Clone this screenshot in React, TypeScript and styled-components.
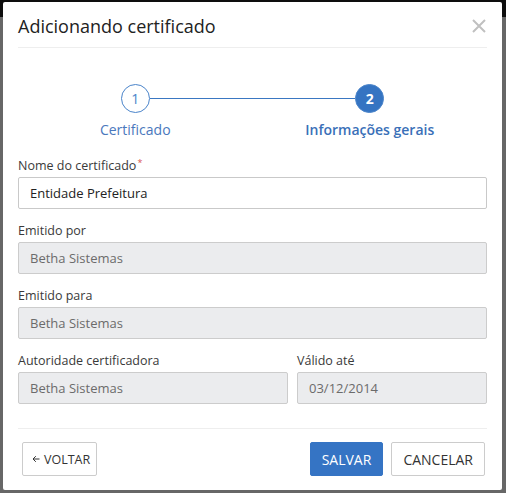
import styled, { createGlobalStyle } from 'styled-components';

const GlobalStyle = createGlobalStyle`
  html, body {
    margin: 0;
    padding: 0;
  }
  body {
    font-family: 'Open Sans', 'Liberation Sans', sans-serif;
    background: linear-gradient(#0e0e0e 0, #0e0e0e 17px, #676767 17px, #676767 100%);
    min-height: 493px;
  }
`;

const Backdrop = styled.div`
  width: 506px;
  height: 493px;
  padding: 2px 3px 0 3px;
  box-sizing: border-box;
`;

const Modal = styled.div`
  width: 499px;
  height: 488px;
  background: #ffffff;
  border-radius: 2px;
  padding: 0 15px;
  box-sizing: border-box;
  display: flex;
  flex-direction: column;
`;

const Header = styled.div`
  display: flex;
  align-items: center;
  justify-content: space-between;
  height: 45px;
  border-bottom: 1px solid #eeeeee;
`;

const Title = styled.h4`
  margin: 0;
  font-size: 18px;
  font-weight: 400;
  color: #222222;
  padding-top: 2px;
`;

const Close = styled.svg`
  width: 14px;
  height: 14px;
  margin-right: 1px;
  margin-top: 2px;
`;

const Stepper = styled.div`
  position: relative;
  display: grid;
  grid-template-columns: 1fr 1fr;
  padding-top: 36px;
  margin-bottom: 18px;
`;

const Connector = styled.div`
  position: absolute;
  top: 50px;
  left: 132px;
  right: 132px;
  height: 1px;
  background: #3a77c2;
`;

const Step = styled.div`
  display: flex;
  flex-direction: column;
  align-items: center;
  position: relative;
`;

const Circle = styled.div<{ $active?: boolean }>`
  width: 27px;
  height: 27px;
  border-radius: 50%;
  border: 1px solid #4a84ca;
  background: ${(p) => (p.$active ? '#3574c2' : '#ffffff')};
  color: ${(p) => (p.$active ? '#ffffff' : '#4a84ca')};
  font-size: 14px;
  font-weight: ${(p) => (p.$active ? 700 : 400)};
  display: flex;
  align-items: center;
  justify-content: center;
`;

const StepLabel = styled.div<{ $active?: boolean }>`
  margin-top: 7px;
  font-size: 14px;
  color: ${(p) => (p.$active ? '#3a70b8' : '#4a78bd')};
  font-weight: ${(p) => (p.$active ? 600 : 400)};
`;

const Field = styled.div`
  display: flex;
  flex-direction: column;
  margin-bottom: 13px;
`;

const Row = styled.div`
  display: grid;
  grid-template-columns: 270px 1fr;
  column-gap: 9px;
`;

const Label = styled.label`
  font-size: 12.5px;
  color: #3a3a3a;
  font-weight: 500;
  margin-bottom: 3px;
  line-height: 17px;
  height: 17px;
`;

const Required = styled.span`
  color: #d9534f;
  font-size: 9px;
  line-height: 0;
  position: relative;
  top: -4px;
  margin-left: 1px;
`;

const Input = styled.input`
  height: 32px;
  box-sizing: border-box;
  border: 1px solid #c9c9c9;
  border-radius: 2px;
  padding: 0 11px;
  font-family: 'Open Sans', 'Liberation Sans', sans-serif;
  font-size: 13px;
  color: #222222;
  background: #ffffff;
  outline: none;
  &:disabled {
    background: #ebecee;
    color: #6b6b6b;
    border-color: #cccccc;
  }
`;

const Footer = styled.div`
  margin-top: auto;
  border-top: 1px solid #eeeeee;
  display: flex;
  justify-content: space-between;
  align-items: center;
  padding: 13px 2px 14px 4px;
`;

const Actions = styled.div`
  display: flex;
  gap: 8px;
`;

const Button = styled.button<{ $primary?: boolean }>`
  height: 34px;
  box-sizing: border-box;
  padding: 0 11px;
  border-radius: 2px;
  font-family: 'Open Sans', 'Liberation Sans', sans-serif;
  font-size: 14px;
  cursor: pointer;
  border: 1px solid ${(p) => (p.$primary ? '#3574c4' : '#cccccc')};
  background: ${(p) => (p.$primary ? '#3574c4' : '#ffffff')};
  color: ${(p) => (p.$primary ? '#ffffff' : '#333333')};
  display: flex;
  align-items: center;
  gap: 4px;
`;

const BackButton = styled(Button)`
  font-size: 12.5px;
  padding: 0 6px 0 9px;
`;

const Arrow = styled.svg`
  width: 8px;
  height: 8px;
`;

export default function App() {
  return (
    <>
      <GlobalStyle />
      <Backdrop>
        <Modal>
          <Header>
            <Title>Adicionando certificado</Title>
            <Close viewBox="0 0 14 14">
              <path d="M1 1 L13 13 M13 1 L1 13" stroke="#c0c0c0" strokeWidth="2" fill="none" />
            </Close>
          </Header>

          <Stepper>
            <Connector />
            <Step>
              <Circle>1</Circle>
              <StepLabel>Certificado</StepLabel>
            </Step>
            <Step>
              <Circle $active>2</Circle>
              <StepLabel $active>Informações gerais</StepLabel>
            </Step>
          </Stepper>

          <Field>
            <Label>
              Nome do certificado<Required>*</Required>
            </Label>
            <Input defaultValue="Entidade Prefeitura" />
          </Field>
          <Field>
            <Label>Emitido por</Label>
            <Input disabled defaultValue="Betha Sistemas" />
          </Field>
          <Field>
            <Label>Emitido para</Label>
            <Input disabled defaultValue="Betha Sistemas" />
          </Field>
          <Row>
            <Field>
              <Label>Autoridade certificadora</Label>
              <Input disabled defaultValue="Betha Sistemas" />
            </Field>
            <Field>
              <Label>Válido até</Label>
              <Input disabled defaultValue="03/12/2014" />
            </Field>
          </Row>

          <Footer>
            <BackButton>
              <Arrow viewBox="0 0 8 8">
                <path d="M7.5 4 H1 M3.8 1.2 L1 4 L3.8 6.8" stroke="#333" strokeWidth="1" fill="none" />
              </Arrow>
              VOLTAR
            </BackButton>
            <Actions>
              <Button $primary>SALVAR</Button>
              <Button>CANCELAR</Button>
            </Actions>
          </Footer>
        </Modal>
      </Backdrop>
    </>
  );
}
